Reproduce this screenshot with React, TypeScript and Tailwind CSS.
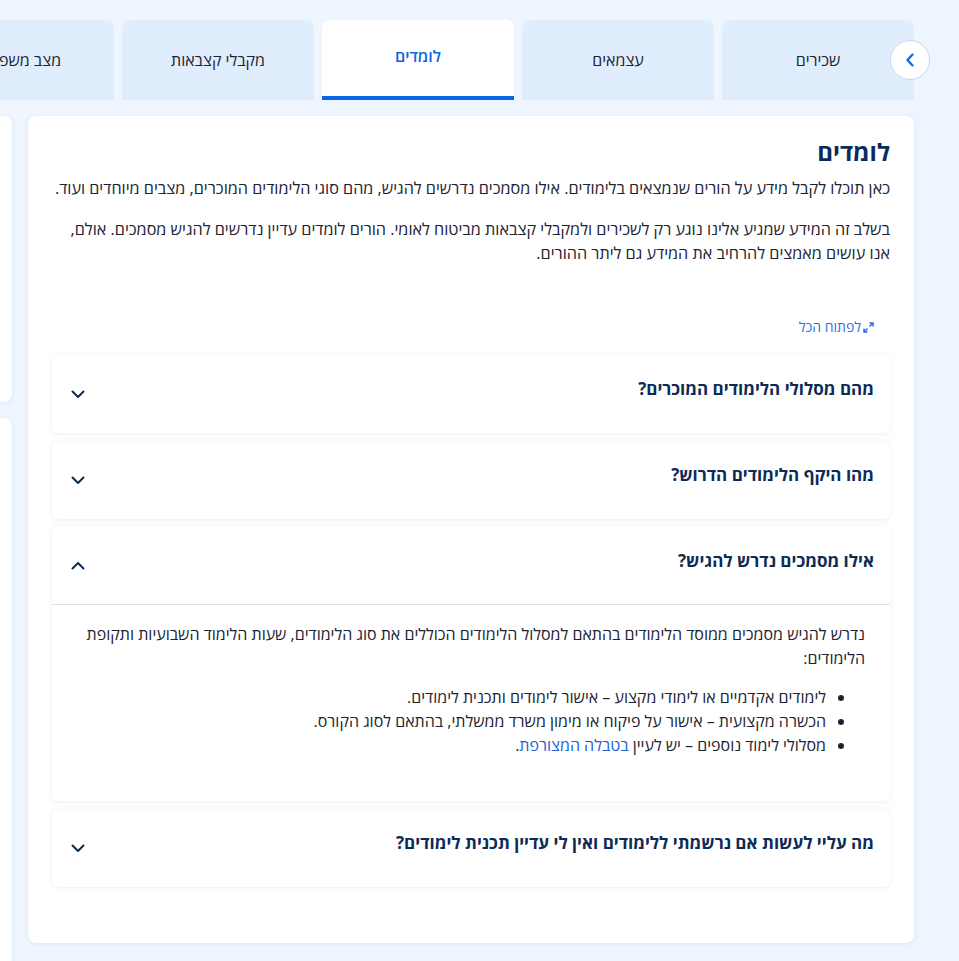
import React from "react";

const Chevron = ({ up = false }: { up?: boolean }) => (
  <svg width="14" height="9" viewBox="0 0 14 9" fill="none" className="shrink-0">
    {up ? (
      <path d="M1.5 7.5L7 2L12.5 7.5" stroke="#0d2b55" strokeWidth="2" strokeLinecap="round" strokeLinejoin="round" />
    ) : (
      <path d="M1.5 1.5L7 7L12.5 1.5" stroke="#0d2b55" strokeWidth="2" strokeLinecap="round" strokeLinejoin="round" />
    )}
  </svg>
);

const tabs = ["שכירים", "עצמאים", "לומדים", "מקבלי קצבאות", "מצב משפחתי"];

export default function App() {
  return (
    <div
      dir="rtl"
      className="min-h-[961px] w-[959px] overflow-hidden bg-[#eef5fe] text-[#1c2333]"
      style={{ fontFamily: '"Open Sans", "DejaVu Sans", sans-serif' }}
    >
      {/* Tabs */}
      <div className="relative pt-5">
        <div className="flex gap-2 pr-[45px]">
          {tabs.map((t) =>
            t === "לומדים" ? (
              <div
                key={t}
                className="flex h-20 w-[192px] shrink-0 items-center justify-center rounded-t-lg border-b-4 border-[#0a66e8] bg-white pb-1 text-[16px] font-semibold text-[#0a66e8]"
              >
                {t}
              </div>
            ) : (
              <div
                key={t}
                className="flex h-20 w-[192px] shrink-0 items-center justify-center rounded-t-lg bg-[#e0edfd] text-[16px] text-[#1c2333]"
              >
                {t}
              </div>
            )
          )}
        </div>
        <div className="absolute right-[29px] top-10 flex h-10 w-10 items-center justify-center rounded-full border border-[#cdd6e8] bg-white">
          <svg width="10" height="14" viewBox="0 0 10 14" fill="none">
            <path d="M7.5 1.5L2.5 7L7.5 12.5" stroke="#0a66e8" strokeWidth="2.2" strokeLinecap="round" strokeLinejoin="round" />
          </svg>
        </div>
      </div>

      {/* Body */}
      <div className="mt-4 flex items-start gap-4 pr-[45px]">
        <div className="w-[886px] shrink-0 rounded-lg bg-white px-6 pb-14 pt-5 shadow-[0_1px_4px_rgba(30,60,120,0.08)]">
          <h2 className="text-[24px] font-bold leading-[32px] text-[#0a2c5a]">לומדים</h2>
          <p className="mt-2 text-[16.2px] leading-6">
            כאן תוכלו לקבל מידע על הורים שנמצאים בלימודים. אילו מסמכים נדרשים להגיש, מהם סוגי הלימודים המוכרים, מצבים מיוחדים ועוד.
          </p>
          <p className="mt-[17px] text-[16.2px] leading-6">
            בשלב זה המידע שמגיע אלינו נוגע רק לשכירים ולמקבלי קצבאות מביטוח לאומי. הורים לומדים עדיין נדרשים להגיש מסמכים. אולם, אנו עושים מאמצים להרחיב את המידע גם ליתר ההורים.
          </p>

          <div className="mt-[52px] flex items-center gap-0.5 pr-4 text-[14px] leading-5 text-[#2b6fe6]">
            <svg width="11" height="11" viewBox="0 0 11 11" fill="none">
              <path d="M6.5 1H10V4.5M10 1L6.5 4.5M4.5 10H1V6.5M1 10L4.5 6.5" stroke="#2b6fe6" strokeWidth="1.5" />
            </svg>
            <span>לפתוח הכל</span>
          </div>

          <div className="mt-[18px] flex flex-col gap-2">
            {["מהם מסלולי הלימודים המוכרים?", "מהו היקף הלימודים הדרוש?"].map((q) => (
              <div
                key={q}
                className="flex h-[78px] items-center justify-between rounded-md bg-white pl-[19px] pr-4 shadow-[0_1px_6px_rgba(0,0,0,0.07)]"
              >
                <span className="-mt-[10px] text-[17px] font-bold text-[#0d2b55]">{q}</span>
                <Chevron />
              </div>
            ))}

            <div className="rounded-md bg-white shadow-[0_1px_6px_rgba(0,0,0,0.07)]">
              <div className="flex h-[78px] items-center justify-between border-b border-[#d9e1ee] pl-[19px] pr-4">
                <span className="-mt-[10px] text-[17px] font-bold text-[#0d2b55]">אילו מסמכים נדרש להגיש?</span>
                <Chevron up />
              </div>
              <div className="pb-[44px] pl-6 pr-[25px] pt-[17px] text-[16px] leading-6">
                <p>
                  נדרש להגיש מסמכים ממוסד הלימודים בהתאם למסלול הלימודים הכוללים את סוג הלימודים, שעות הלימוד השבועיות ותקופת הלימודים:
                </p>
                <ul className="mt-[15px] list-disc pr-[39px] marker:text-[#1c2333]">
                  <li>לימודים אקדמיים או לימודי מקצוע – אישור לימודים ותכנית לימודים.</li>
                  <li>הכשרה מקצועית – אישור על פיקוח או מימון משרד ממשלתי, בהתאם לסוג הקורס.</li>
                  <li>
                    מסלולי לימוד נוספים – יש לעיין <span className="text-[#1d5fd6]">בטבלה המצורפת</span>.
                  </li>
                </ul>
              </div>
            </div>

            <div className="flex h-[78px] items-center justify-between rounded-md bg-white pl-[19px] pr-4 shadow-[0_1px_6px_rgba(0,0,0,0.07)]">
              <span className="-mt-[10px] text-[17px] font-bold text-[#0d2b55]">מה עליי לעשות אם נרשמתי ללימודים ואין לי עדיין תכנית לימודים?</span>
              <Chevron />
            </div>
          </div>
        </div>

        <div className="flex w-[300px] shrink-0 flex-col gap-4">
          <div className="h-[286px] rounded-lg bg-white shadow-[0_1px_4px_rgba(30,60,120,0.08)]" />
          <div className="h-[560px] rounded-lg bg-white shadow-[0_1px_4px_rgba(30,60,120,0.08)]" />
        </div>
      </div>
    </div>
  );
}
